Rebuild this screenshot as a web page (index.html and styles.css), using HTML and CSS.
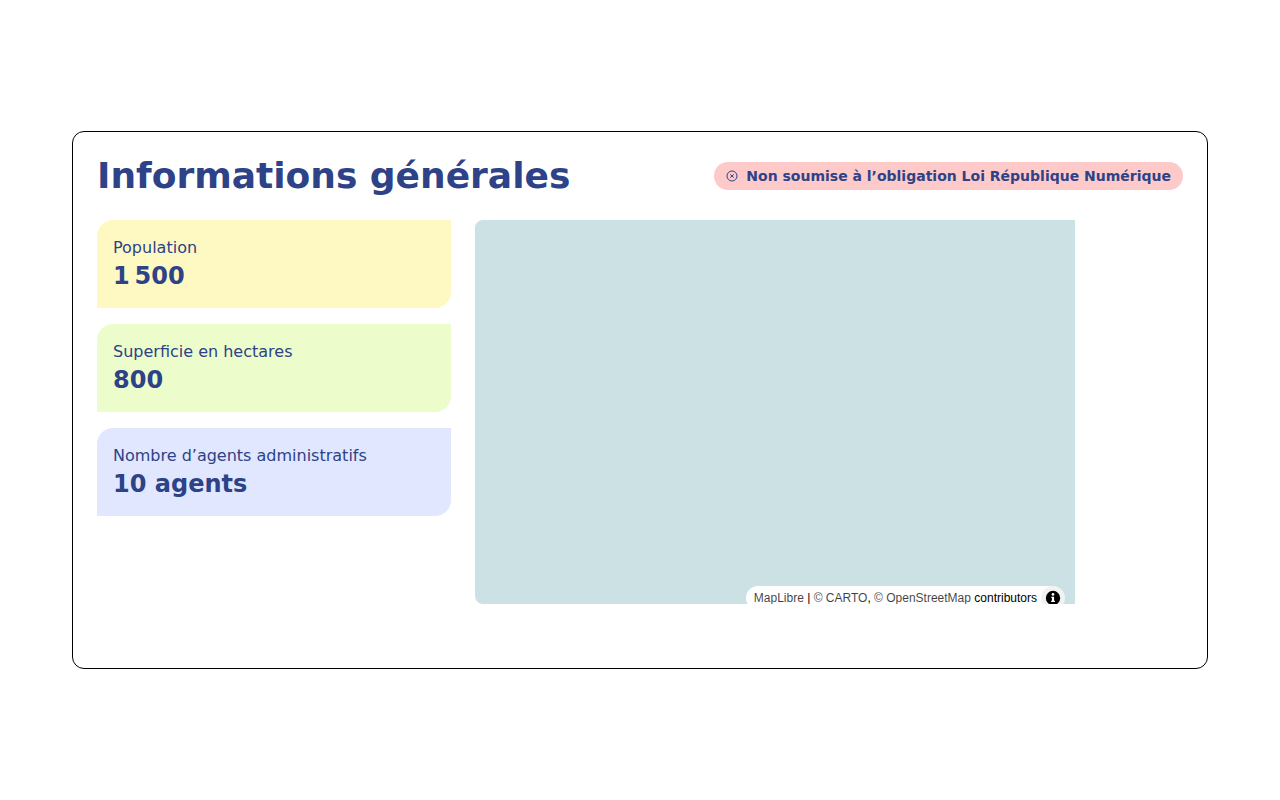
FILE: index.html
```html
<!DOCTYPE html>
<html lang="fr">
<head>
    <meta charset="UTF-8">
    <meta name="viewport" content="width=device-width, initial-scale=1.0">
    <title>Informations générales</title>
    <link rel="stylesheet" href="styles.css">
</head>
<body>
    <section class="panel">
        <header class="panel-header">
            <h1 class="panel-title">Informations générales</h1>
            <div class="badge">
                <svg class="badge-icon" viewBox="0 0 12 12" width="12" height="12" aria-hidden="true">
                    <circle cx="6" cy="6" r="5" fill="none" stroke="currentColor" stroke-width="1"/>
                    <path d="M4.3 4.3l3.4 3.4M7.7 4.3l-3.4 3.4" fill="none" stroke="currentColor" stroke-width="1"/>
                </svg>
                <span>Non soumise à l’obligation Loi République Numérique</span>
            </div>
        </header>

        <div class="panel-body">
            <div class="stats">
                <div class="stat stat-yellow">
                    <p class="stat-label">Population</p>
                    <p class="stat-value">1&#8239;500</p>
                </div>
                <div class="stat stat-green">
                    <p class="stat-label">Superficie en hectares</p>
                    <p class="stat-value">800</p>
                </div>
                <div class="stat stat-blue">
                    <p class="stat-label">Nombre d’agents administratifs</p>
                    <p class="stat-value">10 agents</p>
                </div>
            </div>

            <div class="map">
                <div class="attribution">
                    <span class="attribution-text"><a>MapLibre</a> | <a>© CARTO</a>, <a>© OpenStreetMap</a> <b>contributors</b></span>
                    <span class="attribution-button">
                        <svg viewBox="0 0 20 20" width="24" height="24" aria-hidden="true">
                            <circle cx="10" cy="10" r="6"/>
                            <circle cx="10" cy="7" r="1.1" fill="#fff"/>
                            <path d="M8.6 8.9h2.3v3.3h.7v1.2H8.4v-1.2h.7v-2.1h-.5z" fill="#fff"/>
                        </svg>
                    </span>
                </div>
            </div>
        </div>
    </section>
</body>
</html>
```

FILE: styles.css
```css
body {
    margin: 0;
    font-family: "DejaVu Sans", sans-serif;
    background-color: #fff;
    color: #2d4287;
}

.panel {
    width: 1136px;
    height: 538px;
    box-sizing: border-box;
    margin: 131px auto 0;
    padding: 24px;
    border: 1px solid #000;
    border-radius: 12px;
}

.panel-header {
    display: flex;
    align-items: center;
    justify-content: space-between;
    height: 40px;
    margin-bottom: 24px;
}

.panel-title {
    margin: 0;
    font-size: 36px;
    line-height: 40px;
    font-weight: 700;
}

.badge {
    display: flex;
    align-items: center;
    gap: 8px;
    height: 28px;
    padding: 0 12px;
    border-radius: 14px;
    background-color: #fec9c9;
    font-size: 14px;
    font-weight: 700;
}

.badge-icon {
    flex: none;
}

.panel-body {
    display: flex;
    gap: 24px;
}

.stats {
    display: flex;
    flex-direction: column;
    gap: 16px;
    width: 354px;
}

.stat {
    box-sizing: border-box;
    height: 88px;
    padding: 16px;
    border-radius: 16px 0 16px 0;
}

.stat-yellow {
    background-color: #fef9c3;
}

.stat-green {
    background-color: #ecfccb;
}

.stat-blue {
    background-color: #e0e7ff;
}

.stat-label {
    margin: 0;
    font-size: 16px;
    line-height: 24px;
}

.stat-value {
    margin: 0;
    font-size: 24px;
    line-height: 32px;
    font-weight: 700;
}

.map {
    position: relative;
    width: 600px;
    height: 384px;
    overflow: hidden;
    border-radius: 8px 0 0 8px;
    background-color: #cce1e4;
}

.attribution {
    position: absolute;
    right: 10px;
    bottom: -6px;
    display: flex;
    align-items: center;
    gap: 4px;
    height: 24px;
    padding-left: 8px;
    border-radius: 12px;
    background-color: #fff;
    font-family: "Liberation Sans", Arial, sans-serif;
    font-size: 12px;
    color: #000;
}

.attribution-text a {
    color: rgba(0, 0, 0, 0.75);
}

.attribution-text b {
    font-weight: 400;
}

.attribution-button {
    flex: none;
    width: 24px;
    height: 24px;
    border-radius: 50%;
    background-color: rgba(0, 0, 0, 0.05);
}
```
